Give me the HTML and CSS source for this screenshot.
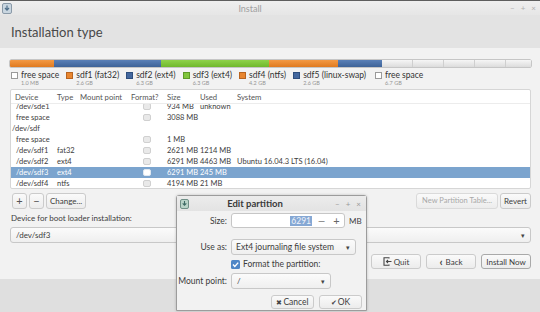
FILE: index.html
```html
<!DOCTYPE html>
<html>
<head>
<meta charset="utf-8">
<link rel="stylesheet" href="styles.css">
</head>
<body>
<div class="win">
  <div class="titlebar">
    <svg class="appicon" width="10" height="11" viewBox="0 0 10 11"><rect x="0.5" y="0.5" width="9" height="10" rx="1.5" fill="#c9d6e0" stroke="#8a9aa8"/><path d="M5 2.5v4.5M3 5l2 2.2L7 5" stroke="#4f6f8a" stroke-width="1.2" fill="none"/></svg>
    <span class="wtitle">Install</span>
    <span class="wctl"><span>&#8211;</span><span>+</span><span>&#215;</span></span>
  </div>
  <div class="header"><h1>Installation type</h1></div>
  <div class="content">
    <div class="pbar">
      <div class="seg orange" style="width:44px"></div>
      <div class="seg blue" style="width:107px"></div>
      <div class="seg green" style="width:108px"></div>
      <div class="seg orange" style="width:69px"></div>
      <div class="seg blue" style="width:44px"></div>
      <div class="seg free"></div>
    </div>
    <div class="legend">
      <div class="li"><span class="sw sw-free"></span><div><div class="ln">free space</div><div class="ls">1.0 MB</div></div></div>
      <div class="li"><span class="sw sw-orange"></span><div><div class="ln">sdf1 (fat32)</div><div class="ls">2.6 GB</div></div></div>
      <div class="li"><span class="sw sw-blue"></span><div><div class="ln">sdf2 (ext4)</div><div class="ls">6.3 GB</div></div></div>
      <div class="li"><span class="sw sw-green"></span><div><div class="ln">sdf3 (ext4)</div><div class="ls">6.3 GB</div></div></div>
      <div class="li"><span class="sw sw-orange"></span><div><div class="ln">sdf4 (ntfs)</div><div class="ls">4.2 GB</div></div></div>
      <div class="li"><span class="sw sw-blue"></span><div><div class="ln">sdf5 (linux-swap)</div><div class="ls">2.6 GB</div></div></div>
      <div class="li"><span class="sw sw-free"></span><div><div class="ln">free space</div><div class="ls">6.7 GB</div></div></div>
    </div>
    <div class="table">
      <div class="row thead">
        <span class="c dev">Device</span><span class="c">Type</span><span class="c">Mount point</span><span class="c">Format?</span><span class="c">Size</span><span class="c">Used</span><span class="c">System</span>
      </div>
      <div class="tbody">
        <div class="rows">
          <div class="row"><span class="c dev">/dev/sde1</span><span class="c"></span><span class="c"></span><span class="c"><i class="cb"></i></span><span class="c">934 MB</span><span class="c">unknown</span><span class="c"></span></div>
          <div class="row"><span class="c dev">free space</span><span class="c"></span><span class="c"></span><span class="c"><i class="cb"></i></span><span class="c">3088 MB</span><span class="c"></span><span class="c"></span></div>
          <div class="row"><span class="c disk">/dev/sdf</span></div>
          <div class="row"><span class="c dev">free space</span><span class="c"></span><span class="c"></span><span class="c"><i class="cb"></i></span><span class="c">1 MB</span><span class="c"></span><span class="c"></span></div>
          <div class="row"><span class="c dev">/dev/sdf1</span><span class="c">fat32</span><span class="c"></span><span class="c"><i class="cb"></i></span><span class="c">2621 MB</span><span class="c">1214 MB</span><span class="c"></span></div>
          <div class="row"><span class="c dev">/dev/sdf2</span><span class="c">ext4</span><span class="c"></span><span class="c"><i class="cb"></i></span><span class="c">6291 MB</span><span class="c">4463 MB</span><span class="c">Ubuntu 16.04.3 LTS (16.04)</span></div>
          <div class="row sel"><span class="c dev">/dev/sdf3</span><span class="c">ext4</span><span class="c"></span><span class="c"><i class="cb"></i></span><span class="c">6291 MB</span><span class="c">245 MB</span><span class="c"></span></div>
          <div class="row"><span class="c dev">/dev/sdf4</span><span class="c">ntfs</span><span class="c"></span><span class="c"><i class="cb"></i></span><span class="c">4194 MB</span><span class="c">21 MB</span><span class="c"></span></div>
        </div>
      </div>
    </div>
    <div class="btnrow">
      <div class="grp">
        <button class="btn sq">+</button>
        <button class="btn sq">&#8722;</button>
        <button class="btn">Change...</button>
      </div>
      <div class="grp">
        <button class="btn dis">New Partition Table...</button>
        <button class="btn">Revert</button>
      </div>
    </div>
    <div class="bootlabel">Device for boot loader installation:</div>
    <div class="combo wide"><span>/dev/sdf3</span><span class="arr">&#9662;</span></div>
    <div class="navrow">
      <button class="btn nav"><svg width="9" height="9" viewBox="0 0 9 9"><path d="M6 1.5V0.8H1v7.4h5V7.5" fill="none" stroke="#444" stroke-width="1.1"/><path d="M8.5 4.5H3.5M5 3l-1.5 1.5L5 6" fill="none" stroke="#444" stroke-width="1.1"/></svg>Quit</button>
      <button class="btn nav"><span class="chev">&#8249;</span>Back</button>
      <button class="btn nav def">Install Now</button>
    </div>
  </div>
  <div class="footer"></div>

  <div class="dialog">
    <div class="dtitle">
      <svg class="dicon" width="9" height="10" viewBox="0 0 9 10"><rect x="0.5" y="0.5" width="8" height="9" rx="1.5" fill="#b9d3c8" stroke="#6f8f86"/><path d="M4.5 2v4M2.7 4.3l1.8 2 1.8-2" stroke="#3d6a64" stroke-width="1.1" fill="none"/></svg>
      <span class="dname">Edit partition</span>
      <span class="dctl"><span>&#8211;</span><span>+</span><span>&#215;</span></span>
    </div>
    <div class="dbody">
      <div class="frow r-size">
        <span class="lab">Size:</span>
        <div class="spin"><span class="val"><span class="hl">6291</span></span><span class="sb">&#8212;</span><span class="sb plus">+</span></div>
        <span class="unit">MB</span>
      </div>
      <div class="frow r-use">
        <span class="lab">Use as:</span>
        <div class="combo use"><span>Ext4 journaling file system</span><span class="arr">&#9662;</span></div>
      </div>
      <div class="frow r-fmt">
        <span class="lab"></span>
        <span class="chk"><svg width="9" height="9" viewBox="0 0 9 9"><rect x="0" y="0" width="9" height="9" rx="1.5" fill="#4f86c6"/><path d="M2 4.6l1.8 1.8L7.2 2.6" stroke="#fff" stroke-width="1.4" fill="none"/></svg></span>
        <span class="chkl">Format the partition:</span>
      </div>
      <div class="frow r-mnt">
        <span class="lab">Mount point:</span>
        <div class="combo mnt"><span>/</span><span class="arr">&#9662;</span></div>
      </div>
      <div class="dbtns">
        <button class="btn dbtn"><span class="ico">&#10006;</span>Cancel</button>
        <button class="btn dbtn"><span class="ico">&#10004;</span>OK</button>
      </div>
    </div>
  </div>
</div>
</body>
</html>
```
FILE: styles.css
```css
* { box-sizing: border-box; }
html, body { margin: 0; padding: 0; }
body {
  width: 540px; height: 312px; overflow: hidden;
  font-family: "Lato", "Open Sans", sans-serif;
  color: #3c3c3c;
  background: #dfdfdf;
}
.win { position: relative; width: 540px; height: 312px; display: flex; flex-direction: column; }

.titlebar {
  height: 15px; flex: none;
  border-top: 1px solid #5e5e5e;
  background: linear-gradient(#efefef, #e6e6e6);
  display: flex; align-items: center;
  padding: 0 4px 0 2px;
}
.appicon { flex: none; }
.wtitle { flex: 1; text-align: center; font-size: 9px; color: #a0a0a0; padding-right: 22px; }
.wctl { display: flex; gap: 6px; font-size: 8px; color: #b0b0b0; }

.header { height: 33px; flex: none; background: #e3e3e3; display: flex; align-items: center; padding-left: 11px; }
.header h1 { margin: 0; font-size: 13px; font-weight: normal; color: #484848; padding-top: 1px; }

.content {
  flex: none; height: 231px;
  background: #f2f2f2;
  padding: 12px 9px 0 10px;
  display: flex; flex-direction: column;
}

.pbar { height: 7px; display: flex; border-radius: 1px; overflow: hidden; box-shadow: 0 0 0 0.5px #9a9a9a; }
.seg { height: 100%; }
.seg.orange { background: linear-gradient(#f39a45, #e07a20); }
.seg.blue { background: linear-gradient(#5a80b8, #3e6398); }
.seg.green { background: linear-gradient(#8fd24a, #70b82c); }
.seg.free { flex: 1; background: repeating-linear-gradient(90deg, transparent 0 30px, #cfcfcf 30px 31px), linear-gradient(#f6f6f6, #dcdcdc); }

.legend { display: flex; margin-top: 3px; height: 17px; padding-left: 1px; }
.li { display: flex; align-items: flex-start; margin-right: 7px; }
.li:nth-child(6) { margin-right: 9px; }
.sw { width: 7px; height: 7px; margin-top: 2px; margin-right: 3px; flex: none; border: 1px solid #8a8a8a; }
.sw-free { background: #fff; border-color: #9a9a9a; }
.sw-orange { background: #e9862f; border-color: #b86420; }
.sw-blue { background: #44689f; border-color: #2f4f7e; }
.sw-green { background: #80c53c; border-color: #5e9a28; }
.ln { font-size: 8.5px; line-height: 10px; color: #333; }
.ls { font-size: 5.5px; line-height: 7px; color: #959595; }

.table {
  margin-top: 2px; height: 100px;
  background: #fff; border: 1px solid #d6d6d6; border-radius: 2px;
  display: flex; flex-direction: column;
}
.row {
  display: grid;
  grid-template-columns: 44px 23px 51px 36px 33px 37px 1fr;
  height: 11px; line-height: 11px; font-size: 7.5px; white-space: nowrap;
}
.c { padding-left: 2px; }
.c.dev { padding-left: 5px; }
.c.disk { padding-left: 1px; grid-column: 1 / span 3; }
.thead { height: 14px; line-height: 14px; color: #555; border-bottom: 1px solid #ececec; font-size: 7.7px; }
.thead .c.dev { padding-left: 4px; }
.tbody { height: 84px; overflow: hidden; }
.rows { margin-top: -3px; }
.row.sel { background: #7ba4ce; color: #fff; }
.cb {
  display: inline-block; width: 8px; height: 7px; margin-left: 12px; vertical-align: -1px;
  border: 1px solid #d0d0d0; border-radius: 2px; background: #e9e9e9;
}
.row.sel .cb { background: #fff; border-color: #e0e8f0; }

.btn {
  font-family: inherit; font-size: 8px; color: #3c3c3c;
  background: linear-gradient(#fafafa, #ececec);
  border: 1px solid #cbcbcb; border-radius: 3px;
  padding: 0 3px; height: 16px; line-height: 14px; white-space: nowrap;
  display: inline-flex; align-items: center; justify-content: center;
}
.btnrow { display: flex; justify-content: space-between; margin-top: 4px; height: 16px; }
.grp { display: flex; gap: 2px; }
.btnrow .grp:first-child { padding-left: 2px; }
.btn.sq { width: 15px; font-size: 11px; padding: 0; color: #555; }
.btn.dis { color: #a8a8a8; border-color: #dadada; width: 82px; font-size: 7.5px; padding: 0 2px; }

.bootlabel { font-size: 8px; margin-top: 2px; height: 15px; line-height: 15px; padding-left: 1px; color: #3c3c3c; }
.combo {
  height: 16px; display: flex; align-items: center; justify-content: space-between;
  background: linear-gradient(#fbfbfb, #efefef);
  border: 1px solid #c8c8c8; border-radius: 3px;
  font-size: 8px; padding: 0 5px 0 5px; white-space: nowrap;
}
.combo .arr { font-size: 7px; color: #444; }
.combo.wide { margin-top: 1px; }

.navrow { display: flex; justify-content: flex-end; gap: 5px; margin-top: 11px; }
.btn.nav { width: 50px; height: 15px; gap: 1px; }
.btn.nav svg { margin-right: 1px; }
.chev { font-size: 11px; font-weight: bold; margin-right: 2px; line-height: 10px; }
.btn.def { border-color: #a9a9a9; }

.footer { flex: 1; background: #dfdfdf; }

.dialog {
  position: absolute; left: 176px; top: 195px; width: 191px; height: 116px;
  background: #f2f2f2; border: 1px solid #9c9c9c; border-radius: 3px 3px 0 0;
  box-shadow: 0 0 3px rgba(0,0,0,0.2);
}
.dtitle {
  height: 15px; display: flex; align-items: center; padding: 0 5px 0 3px;
  background: linear-gradient(#ececec, #e3e3e3);
}
.dname { flex: 1; text-align: center; font-size: 9.5px; font-weight: bold; color: #3a3a3a; padding-right: 14px; }
.dctl { display: flex; gap: 6px; font-size: 8px; color: #9a9a9a; }
.dbody { padding: 2px 4px 0 0; }
.frow { display: flex; align-items: center; font-size: 8.5px; }
.lab { width: 52px; text-align: right; padding-right: 2px; flex: none; white-space: nowrap; }
.frow .lab + * { margin-left: 2px; }
.r-size { height: 15px; }
.spin {
  width: 114px; height: 15px; display: flex; align-items: center;
  background: #fff; border: 1px solid #c6c6c6; border-radius: 3px;
}
.val { flex: 1; text-align: right; padding-right: 2px; }
.hl { background: #86a8d4; color: #eef3fa; padding: 0 1px; }
.sb { width: 15px; text-align: center; font-size: 9px; color: #666; }
.sb.plus { font-size: 11px; }
.unit { margin-left: 4px; font-size: 8px; }
.r-use { height: 16px; margin-top: 11px; }
.combo.use { width: 125px; font-size: 8.5px; padding-left: 4px; }
.r-fmt { height: 14px; margin-top: 2px; }
.chk { display: flex; margin-left: 3px; }
.chkl { margin-left: 3px; font-size: 8.5px; }
.r-mnt { height: 16px; margin-top: 2px; }
.combo.mnt { width: 100px; padding-left: 5px; }
.dbtns { display: flex; justify-content: flex-end; gap: 5px; margin-top: 6px; }
.btn.dbtn { height: 14px; width: 43px; font-size: 8.5px; }
.dbtn .ico { font-size: 7px; margin-right: 1px; color: #444; }
```
